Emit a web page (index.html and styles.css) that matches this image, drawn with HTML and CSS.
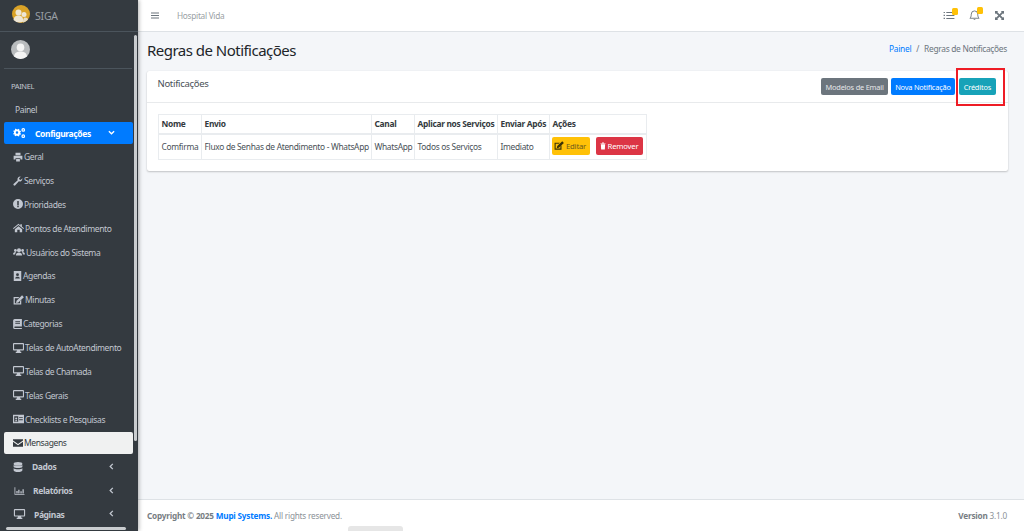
FILE: index.html
```html
<!DOCTYPE html>
<html lang="pt-BR">
<head>
<meta charset="utf-8">
<title>Regras de Notificações</title>
<link rel="stylesheet" href="styles.css">
</head>
<body>
<svg class="defs" width="0" height="0" aria-hidden="true">
  <symbol id="i-print" viewBox="0 0 16 16"><path d="M4 1h8v4H4zM1 6h14v6h-3v-2H4v2H1zM5 11h6v4H5z"/></symbol>
  <symbol id="i-wrench" viewBox="0 0 16 16"><path d="M15 4.500a4.200 4.200 0 0 1-5.600 4L3.700 14.800a1.700 1.700 0 0 1-2.500-2.500L7.500 6.600A4.200 4.200 0 0 1 12.300 1L9.700 3.600l.6 2.100 2.100.6L15 3.700z"/></symbol>
  <symbol id="i-info" viewBox="0 0 16 16"><path fill-rule="evenodd" d="M8 0a8 8 0 1 1 0 16A8 8 0 0 1 8 0zM6.800 3v7h2.400V3zM6.800 10.800v2.400h2.400v-2.400z"/></symbol>
  <symbol id="i-home" viewBox="0 0 18 16"><path d="M9 1 0 8.300l1 1.400L9 3.200l8 6.500 1-1.400-3.500-2.800V2h-2.500v1.800zM3 10.200 9 5.200l6 5V15h-4v-4H7v4H3z"/></symbol>
  <symbol id="i-users" viewBox="0 0 20 16"><circle cx="10" cy="5" r="3.400"/><circle cx="4" cy="5.500" r="2.300"/><circle cx="16" cy="5.500" r="2.300"/><path d="M4.800 14c0-3.500 2-5 5.200-5s5.200 1.500 5.200 5zM0 12c0-2 1.500-3.800 3.500-3.800l1.500.7C3.800 10 3.500 11 3.500 12zM20 12c0-2-1.500-3.800-3.500-3.800l-1.500.7c1.200 1.100 1.500 2.100 1.500 3.100z"/></symbol>
  <symbol id="i-book-user" viewBox="0 0 14 16"><path fill-rule="evenodd" d="M1 0h12v16H1zM7 3.500a2.300 2.300 0 1 0 0 4.600 2.300 2.300 0 0 0 0-4.600zM3.200 12h7.600C10.800 10 9 9 7 9s-3.800 1-3.800 3z"/></symbol>
  <symbol id="i-edit" viewBox="0 0 18 16"><path d="M1 3h9.500L8.500 5H3v8.500h8.500V9.500L13.500 7.500V15.500H1z"/><path d="M14.800.300 17.800 3.300 8.700 12 5 12.800l.8-3.700z"/></symbol>
  <symbol id="i-book" viewBox="0 0 14 16"><path fill-rule="evenodd" d="M2.500 0H14v12H3a1.200 1.200 0 0 0 0 2.400h11V16H2.500A2.500 2.500 0 0 1 0 13.500v-11A2.500 2.500 0 0 1 2.500 0zM3.500 3v1.500H11V3zM3.500 6v1.500H11V6z"/></symbol>
  <symbol id="i-desktop" viewBox="0 0 18 16"><path fill-rule="evenodd" d="M1.500 0h15A1.500 1.500 0 0 1 18 1.500v9a1.500 1.500 0 0 1-1.500 1.500H11.500l.5 2h1.500v2h-9v-2H6l.5-2h-5A1.500 1.500 0 0 1 0 10.500v-9A1.500 1.500 0 0 1 1.500 0zM1.800 1.800v8.400h14.400V1.800z"/></symbol>
  <symbol id="i-card" viewBox="0 0 18 16"><path fill-rule="evenodd" d="M0 1h18v14H0zM2 3.500v9h6.500v-9zM10 5v1.500h6V5zM10 8.500V10h6V8.500zM3.500 11.500c0-1.500.8-2 1.700-2s1.800.5 1.800 2zM5.200 5.500a1.700 1.700 0 1 0 0 3.400 1.700 1.700 0 0 0 0-3.400z"/></symbol>
  <symbol id="i-mail" viewBox="0 0 16 16"><path d="M0 2h16v2L8 9.500 0 4zM0 6l8 5.500L16 6v8H0z"/></symbol>
  <symbol id="i-cogs" viewBox="0 0 20 16"><path fill-rule="evenodd" d="M6 2l1.500.3.900-1 1.500.9-.4 1.300 1 1 1.400-.3.600 1.600-1.200.7v2l1.200.7-.6 1.600-1.400-.3-1 1 .4 1.300-1.500.9-.9-1L6 12.500l-1.500-.2-.9 1-1.500-.9.400-1.300-1-1-1.400.3L0 8.800l1.200-.7v-2L0 5.400.6 3.800l1.400.3 1-1-.4-1.300 1.500-.9.9 1zM6 5.300a2 2 0 1 0 0 4 2 2 0 0 0 0-4z"/><path fill-rule="evenodd" d="M16 0a3 3 0 1 1 0 6 3 3 0 0 1 0-6zM16 2a1 1 0 1 0 0 2 1 1 0 0 0 0-2zM16 10a3 3 0 1 1 0 6 3 3 0 0 1 0-6zM16 12a1 1 0 1 0 0 2 1 1 0 0 0 0-2z"/></symbol>
  <symbol id="i-db" viewBox="0 0 14 16"><ellipse cx="7" cy="3" rx="7" ry="3"/><path d="M0 4.800C2 7 12 7 14 4.800V8C12 10.200 2 10.200 0 8zM0 9.800c2 2.200 12 2.200 14 0V13c0 1.700-3 3-7 3s-7-1.300-7-3z"/></symbol>
  <symbol id="i-chart" viewBox="0 0 16 16"><path d="M0 2h1.300v10.700H16V14H0zM3 8h2v4H3zM6 6h2v6H6zM9.500 8.500h2V12h-2zM12.800 5h2v7h-2z"/></symbol>
  <symbol id="i-trash" viewBox="0 0 14 16"><path d="M5 0h4l.5 1.500H13V3H1V1.500h3.500zM2 4h10l-.7 12H2.700z"/></symbol>
</svg>

<aside class="sidebar">
  <div class="brand">
    <span class="brand-logo"><svg viewBox="0 0 18 18"><circle cx="9" cy="9" r="9" fill="#d9a227"/><circle cx="6.500" cy="7.500" r="3" fill="#eee6d4"/><circle cx="12" cy="9.500" r="2.500" fill="#eee6d4"/><path d="M1.500 15c.5-3.500 2.500-4.500 5-4.500 3 0 4.500 1.500 5 6a9 9 0 0 1-10-1.500z" fill="#eee6d4"/><path d="M11 17.500c0-3 .5-5 2-5s3 .8 3 2a9 9 0 0 1-5 3z" fill="#e6dcc6"/></svg></span>
    <span class="brand-text">SIGA</span>
  </div>
  <div class="sidebar-scroll">
    <div class="user">
      <svg class="avatar" viewBox="0 0 18 18"><circle cx="9" cy="9" r="9" fill="#b9bcbe"/><circle cx="9" cy="7" r="3.600" fill="#f4f4f4"/><path d="M2.800 15.500C3.500 12 6 11 9 11s5.500 1 6.200 4.500A9 9 0 0 1 2.800 15.500z" fill="#f4f4f4"/></svg>
    </div>
    <nav class="nav">
      <div class="nav-header">PAINEL</div>
      <a class="nav-item plain">Painel</a>
      <a class="nav-item group active"><svg class="gi"><use href="#i-cogs"/></svg><span class="group-label">Configurações</span><svg class="chev" viewBox="0 0 8 8"><path d="M1 2.500 4 5.500 7 2.500" fill="none" stroke="currentColor" stroke-width="1.500"/></svg></a>
      <a class="nav-item sub"><svg class="ic w10"><use href="#i-print"/></svg>Geral</a>
      <a class="nav-item sub"><svg class="ic w10"><use href="#i-wrench"/></svg>Serviços</a>
      <a class="nav-item sub"><svg class="ic w10"><use href="#i-info"/></svg>Prioridades</a>
      <a class="nav-item sub"><svg class="ic w11"><use href="#i-home"/></svg>Pontos de Atendimento</a>
      <a class="nav-item sub"><svg class="ic w12"><use href="#i-users"/></svg>Usuários do Sistema</a>
      <a class="nav-item sub"><svg class="ic w9"><use href="#i-book-user"/></svg>Agendas</a>
      <a class="nav-item sub"><svg class="ic w11"><use href="#i-edit"/></svg>Minutas</a>
      <a class="nav-item sub"><svg class="ic w9"><use href="#i-book"/></svg>Categorias</a>
      <a class="nav-item sub"><svg class="ic w11"><use href="#i-desktop"/></svg>Telas de AutoAtendimento</a>
      <a class="nav-item sub"><svg class="ic w11"><use href="#i-desktop"/></svg>Telas de Chamada</a>
      <a class="nav-item sub"><svg class="ic w11"><use href="#i-desktop"/></svg>Telas Gerais</a>
      <a class="nav-item sub"><svg class="ic w11"><use href="#i-card"/></svg>Checklists e Pesquisas</a>
      <a class="nav-item sub current"><svg class="ic w10"><use href="#i-mail"/></svg>Mensagens</a>
      <a class="nav-item group"><svg class="gi narrow"><use href="#i-db"/></svg><span class="group-label l-dados">Dados</span><svg class="chev" viewBox="0 0 8 8"><path d="M5.500 1 2.500 4 5.500 7" fill="none" stroke="currentColor" stroke-width="1.500"/></svg></a>
      <a class="nav-item group"><svg class="gi"><use href="#i-chart"/></svg><span class="group-label l-rel">Relatórios</span><svg class="chev" viewBox="0 0 8 8"><path d="M5.500 1 2.500 4 5.500 7" fill="none" stroke="currentColor" stroke-width="1.500"/></svg></a>
      <a class="nav-item group"><svg class="gi"><use href="#i-desktop"/></svg><span class="group-label l-pag">Páginas</span><svg class="chev" viewBox="0 0 8 8"><path d="M5.500 1 2.500 4 5.500 7" fill="none" stroke="currentColor" stroke-width="1.500"/></svg></a>
    </nav>
    <span class="vbar"></span>
    <span class="hbar"></span>
  </div>
</aside>

<div class="main">
  <header class="topbar">
    <svg class="burger" viewBox="0 0 8 7"><path d="M0 .5h8v1H0zM0 3h8v1H0zM0 5.500h8v1H0z"/></svg>
    <span class="hospital">Hospital Vida</span>
    <div class="top-icons">
      <span class="top-icon"><svg viewBox="0 0 12 10" class="t-list"><path d="M3 1.200h9v1H3zM3 4.500h9v1H3zM3 7.800h9v1H3zM0 1h1.500v1.300H0zM0 4.300h1.500v1.300H0zM0 7.600h1.500v1.300H0z"/></svg><i class="dot"></i></span>
      <span class="top-icon"><svg viewBox="0 0 12 12" class="t-bell"><path d="M6 1a3.500 3.500 0 0 1 3.500 3.500c0 3 1 4 1.500 4.500H1c.5-.5 1.500-1.500 1.500-4.500A3.500 3.500 0 0 1 6 1z" fill="none" stroke="currentColor"/><path d="M5 10h2a1 1 0 0 1-2 0z"/></svg><i class="dot"></i></span>
      <span class="top-icon"><svg viewBox="0 0 10 10" class="t-exp"><path d="M0 0h3.500L2.500 1l2.500 2.500L7.500 1l-1-1H10v3.500L9 2.500 6.300 5 9 7.500l1-1V10H6.500l1-1L5 6.500 2.500 9l1 1H0V6.500l1 1L3.700 5 1 2.500l-1 1z"/></svg></span>
    </div>
  </header>

  <section class="content">
    <div class="page-head">
      <h1>Regras de Notificações</h1>
      <div class="crumbs"><a>Painel</a><span class="sep">/</span><span>Regras de Notificações</span></div>
    </div>

    <div class="card">
      <div class="card-head">
        <span class="card-title">Notificações</span>
        <div class="card-tools">
          <button class="btn grey">Modelos de Email</button>
          <button class="btn blue">Nova Notificação</button>
          <button class="btn teal">Créditos</button>
          <span class="mark"></span>
        </div>
      </div>
      <div class="card-body">
        <table class="rules">
          <thead>
            <tr><th class="c-nome">Nome</th><th class="c-envio">Envio</th><th class="c-canal">Canal</th><th class="c-aplicar">Aplicar nos Serviços</th><th class="c-apos">Enviar Após</th><th class="c-acoes">Ações</th></tr>
          </thead>
          <tbody>
            <tr>
              <td>Comfirma</td>
              <td>Fluxo de Senhas de Atendimento - WhatsApp</td>
              <td>WhatsApp</td>
              <td>Todos os Serviços</td>
              <td>Imediato</td>
              <td class="actions">
                <div class="action-row">
                  <button class="btn yellow"><svg class="bi edit"><use href="#i-edit"/></svg>Editar</button>
                  <button class="btn red"><svg class="bi"><use href="#i-trash"/></svg>Remover</button>
                </div>
              </td>
            </tr>
          </tbody>
        </table>
      </div>
    </div>
  </section>

  <footer class="footer">
    <span><b>Copyright © 2025 <a>Mupi Systems.</a></b> All rights reserved.</span>
    <span><b>Version</b> 3.1.0</span>
    <span class="blob"></span>
  </footer>
</div>
</body>
</html>
```

FILE: styles.css
```css
* { box-sizing: border-box; }
html, body { height: 100%; margin: 0; }
body {
  display: flex;
  height: 531px;
  overflow: hidden;
  font-family: "Noto Sans", "Open Sans", sans-serif;
  font-size: 8.500px;
  letter-spacing: -.3px;
  color: #212529;
  background: #f4f6f9;
}
.defs { position: absolute; }
svg { fill: currentColor; display: block; flex: none; }

.sidebar {
  width: 138px;
  flex: none;
  display: flex;
  flex-direction: column;
  background: #343a40;
  color: #c2c7d0;
  box-shadow: 1px 0 4px rgba(0,0,0,.3);
  position: relative;
  z-index: 2;
}
.brand {
  height: 32px;
  display: flex;
  align-items: center;
  padding-left: 12px;
  gap: 5px;
  border-bottom: 1px solid #4b545c;
  flex: none;
}
.brand-logo { display: block; margin-top: -4px; }
.brand-logo svg { width: 18px; height: 18px; }
.brand-text { font-size: 10.500px; color: #9a9fa5; letter-spacing: -.2px; }

.sidebar-scroll { position: relative; flex: 1; min-height: 0; overflow: hidden; }
.user {
  margin: 0 6px 0 4px;
  height: 37px;
  padding: 8px 0 0 7px;
  border-bottom: 1px solid #4b545c;
}
.avatar { width: 19px; height: 19px; }

.nav { padding: 0 5px 0 4px; letter-spacing: -.38px; }
.nav-header {
  font-size: 7.500px;
  color: #c2c7d0;
  padding: 12px 0 0 7px;
  height: 28.500px;
}
.nav-item {
  display: flex;
  align-items: center;
  height: 23.850px;
  color: #c2c7d0;
  white-space: nowrap;
  border-radius: 2px;
}
.nav-item.plain { padding-left: 11px; height: 23.500px; }
.sub { padding-left: 9px; }
.ic { height: 10px; margin-right: 1px; }
.w9 { width: 9px; }
.w10 { width: 10px; }
.w11 { width: 11px; }
.w12 { width: 12px; }
.current {
  background: #f0f1f1;
  color: #343a40;
  height: 22px;
  margin: 1px 0 .850px;
}
.group { font-weight: 700; padding-left: 9px; position: relative; }
.group.active { background: #007bff; color: #fff; height: 22px; margin: 1px 0 .850px; }
.gi { width: 13px; height: 10px; }
.gi.narrow { width: 10px; }
.group-label { margin-left: 9px; }
.l-dados { margin-left: 9px; }
.l-rel { margin-left: 7px; }
.l-pag { margin-left: 8px; }
.chev { width: 7px; height: 7px; position: absolute; right: 18px; top: 50%; margin-top: -4px; }

.vbar {
  position: absolute;
  right: 1px;
  top: 3px;
  width: 3px;
  height: 406px;
  background: #c9cccf;
  border-radius: 2px;
}
.hbar {
  position: absolute;
  left: 6px;
  bottom: 1px;
  width: 120px;
  height: 3px;
  background: #c9cccf;
  border-radius: 2px;
}

.main { flex: 1; min-width: 0; display: flex; flex-direction: column; }
.topbar {
  height: 32px;
  flex: none;
  background: #fff;
  border-bottom: 1px solid #dee2e6;
  display: flex;
  align-items: center;
  padding-left: 13px;
}
.burger { width: 8px; height: 7px; color: #6c757d; }
.hospital { margin-left: 18px; font-size: 8.300px; color: #9a9fa4; }
.top-icons { margin-left: auto; display: flex; align-items: center; }
.top-icon { position: relative; color: #6c757d; display: block; margin-right: 13px; }
.top-icon:nth-child(2) { margin-right: 15px; }
.top-icon:last-child { margin-right: 20px; }
.t-list { width: 12px; height: 9px; }
.t-bell { width: 11px; height: 11px; margin-left: 1px; }
.t-exp { width: 9px; height: 9px; margin-left: 0; }
.dot {
  position: absolute;
  right: -3px;
  top: -3px;
  width: 6px;
  height: 7px;
  border-radius: 1.500px;
  background: #ffc107;
}

.content { flex: 1; min-height: 0; padding: 0 16px 0 9px; }
.page-head { display: flex; justify-content: space-between; align-items: center; height: 39px; padding-bottom: 4px; }
h1 { margin: 0; font-size: 15px; font-weight: 400; color: #212529; letter-spacing: -.52px; }
.crumbs { font-size: 8.400px; color: #6c757d; display: flex; padding-right: 1px; margin-top: -3px; }
.crumbs a { color: #007bff; }
.sep { margin: 0 5px; }

.card {
  height: 100px;
  background: #fff;
  border-radius: 2px;
  box-shadow: 0 0 1px rgba(0,0,0,.13), 0 1px 2px rgba(0,0,0,.2);
}
.card-head {
  height: 32px;
  border-bottom: 1px solid #e8eaec;
  display: flex;
  justify-content: space-between;
  padding: 6px 12px 0 10.500px;
}
.card-title { font-size: 9.500px; color: #495057; }
.card-tools { display: flex; gap: 3px; position: relative; height: 17px; margin-top: 1px; }
.btn {
  font-family: inherit;
  font-size: 7.400px;
  letter-spacing: -.2px;
  border: 0;
  height: 17px;
  padding: 0 4px;
  border-radius: 2px;
  color: #fff;
  display: inline-flex;
  align-items: center;
  white-space: nowrap;
}
.grey { background: #6c757d; color: #e4e6e8; padding: 0 4.500px; }
.blue { background: #007bff; }
.teal { background: #17a2b8; padding: 0 5px; margin-left: 1px; }
.yellow { background: #ffc107; color: #6b5a1e; }
.red { background: #dc3545; }
.mark {
  position: absolute;
  right: -9px;
  top: -10px;
  width: 49px;
  height: 38px;
  border: 2px solid #ee1c25;
}

.card-body { padding: 11px 11px 0; }
.rules { border-collapse: collapse; table-layout: fixed; width: 488px; font-size: 8.400px; color: #495057; }
.rules th, .rules td {
  border: 1px solid #e9ecef;
  text-align: left;
  padding: 0 2.500px;
  white-space: nowrap;
  height: 26px;
}
.rules th { height: 19px; color: #343a40; font-weight: 700; border-bottom-width: 2px; }
.c-nome { width: 43px; }
.c-envio { width: 170px; }
.c-canal { width: 43px; }
.c-aplicar { width: 83px; }
.c-apos { width: 52px; }
.c-acoes { width: 97px; }
.action-row { display: flex; gap: 6px; margin: -2px 0 0 -1px; }
.action-row .btn { height: 18px; font-size: 7.700px; }
.action-row .yellow { padding: 0 3.500px 0 2.500px; }
.action-row .red { padding: 0 4.500px 0 4px; }
.bi { width: 6px; height: 8px; margin-right: 2px; }
.bi.edit { width: 10px; height: 9px; color: #3a3208; }

.footer {
  height: 32px;
  flex: none;
  background: #fff;
  border-top: 1px solid #dee2e6;
  display: flex;
  justify-content: space-between;
  align-items: center;
  padding: 0 17px 0 9px;
  font-size: 8.200px;
  letter-spacing: -.2px;
  color: #8b9197;
  position: relative;
}
.footer b { color: #777d83; }
.footer a { color: #007bff; }
.blob {
  position: absolute;
  left: 210px;
  bottom: 0;
  width: 55px;
  height: 5px;
  background: #e6e6e6;
  border-radius: 3px 3px 0 0;
}
```
